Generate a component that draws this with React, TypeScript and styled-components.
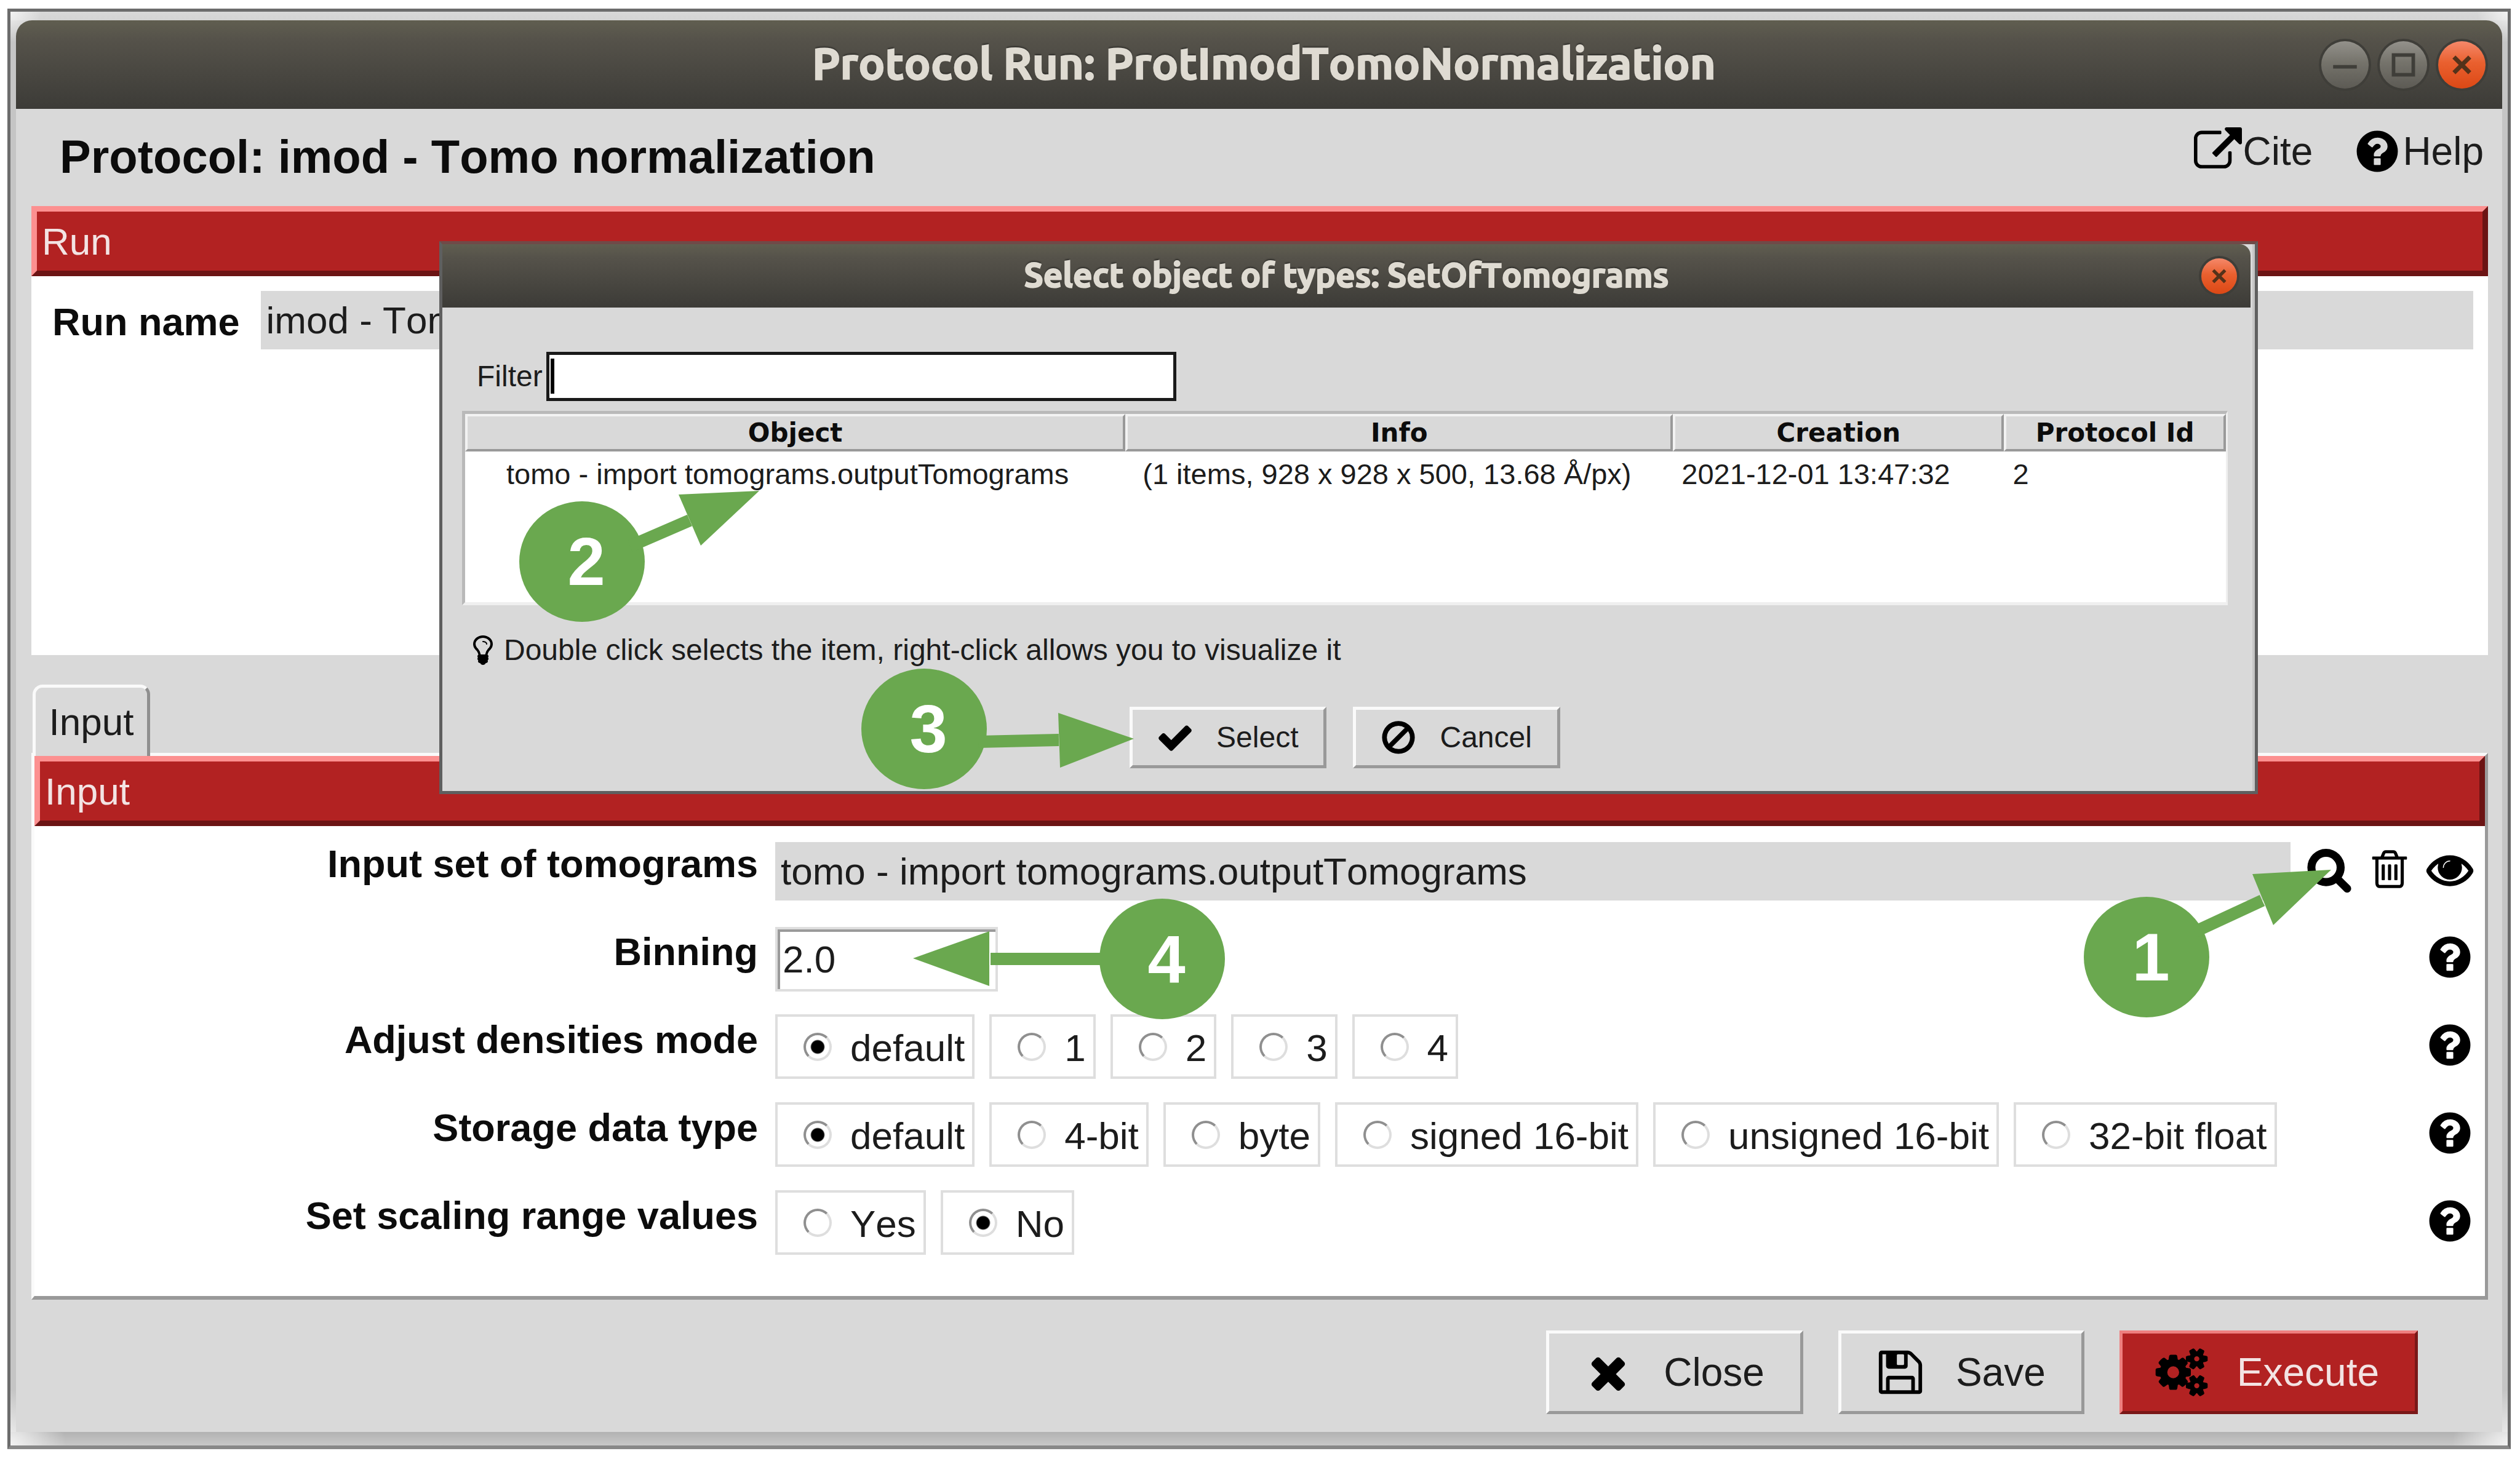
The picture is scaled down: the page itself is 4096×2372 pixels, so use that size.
import React from "react";
import styled, { createGlobalStyle, css } from "styled-components";

const sans = `"Liberation Sans", Arial, Helvetica, sans-serif`;
const titleFont = `Ubuntu, "Noto Sans", "Open Sans", sans-serif`;
const headFont = `"DejaVu Sans", Verdana, sans-serif`;

const GlobalStyle = createGlobalStyle`
  * { box-sizing: border-box; }
  body { margin: 0; background: #ffffff; font-family: ${sans}; font-kerning: none; color: #1c1c1c; }
  button, input { font-family: inherit; font-kerning: inherit; color: inherit; }
`;

/* ---------- icons ---------- */

const glyphs = {
  question:
    "M1024 1376v-192q0-14-9-23t-23-9h-192q-14 0-23 9t-9 23v192q0 14 9 23t23 9h192q14 0 23-9t9-23zm256-672q0-88-55.5-163t-138.5-116-170-41q-243 0-371 213-15 24 8 42l132 100q7 6 19 6 16 0 25-12 53-68 86-92 34-24 86-24 48 0 85.5 26t37.5 59q0 38-20 61t-68 45q-63 28-115.5 86.5t-52.5 125.5v36q0 14 9 23t23 9h192q14 0 23-9t9-23q0-19 21.5-49.5t54.5-49.5q32-18 49-28.5t46-35 44.5-48 28-60.5 12.5-81zm384 192q0 209-103 385.5t-279.5 279.5-385.5 103-385.5-103-279.5-279.5-103-385.5 103-385.5 279.5-279.5 385.5-103 385.5 103 279.5 279.5 103 385.5z",
  search:
    "M1216 832q0-185-131.5-316.5t-316.5-131.5-316.5 131.5-131.5 316.5 131.5 316.5 316.5 131.5 316.5-131.5 131.5-316.5zm512 832q0 52-38 90t-90 38q-54 0-90-38l-343-342q-179 124-399 124-143 0-273.5-55.5t-225-150-150-225-55.5-273.5 55.5-273.5 150-225 225-150 273.5-55.5 273.5 55.5 225 150 150 225 55.5 273.5q0 220-124 399l343 343q37 37 37 90z",
  trash:
    "M704 736v576q0 14-9 23t-23 9h-64q-14 0-23-9t-9-23v-576q0-14 9-23t23-9h64q14 0 23 9t9 23zm256 0v576q0 14-9 23t-23 9h-64q-14 0-23-9t-9-23v-576q0-14 9-23t23-9h64q14 0 23 9t9 23zm256 0v576q0 14-9 23t-23 9h-64q-14 0-23-9t-9-23v-576q0-14 9-23t23-9h64q14 0 23 9t9 23zm128 724v-948h-896v948q0 22 7 40.5t14.5 27 10.5 8.5h832q3 0 10.5-8.5t14.5-27 7-40.5zm-672-1076h448l-48-117q-7-9-17-11h-317q-10 2-17 11zm928 32v64q0 14-9 23t-23 9h-96v948q0 83-47 143.5t-113 60.5h-832q-66 0-113-58.5t-47-141.5v-952h-96q-14 0-23-9t-9-23v-64q0-14 9-23t23-9h309l70-167q15-37 54-63t79-26h320q40 0 79 26t54 63l70 167h309q14 0 23 9t9 23z",
  eye:
    "M1664 960q-152-236-381-353 61 104 61 225 0 185-131.5 316.5t-316.5 131.5-316.5-131.5-131.5-316.5q0-121 61-225-229 117-381 353 133 205 333.5 326.5t434.5 121.5 434.5-121.5 333.5-326.5zm-720-384q0-20-14-34t-34-14q-125 0-214.5 89.5t-89.5 214.5q0 20 14 34t34 14 34-14 14-34q0-86 61-147t147-61q20 0 34-14t14-34zm848 384q0 34-20 69-140 230-376.5 368.5t-499.5 138.5-499.5-139-376.5-368q-20-35-20-69t20-69q140-229 376.5-368t499.5-139 499.5 139 376.5 368q20 35 20 69z",
  external:
    "M1408 928v320q0 119-84.5 203.5t-203.5 84.5h-832q-119 0-203.5-84.5t-84.5-203.5v-832q0-119 84.5-203.5t203.5-84.5h704q14 0 23 9t9 23v64q0 14-9 23t-23 9h-704q-66 0-113 47t-47 113v832q0 66 47 113t113 47h832q66 0 113-47t47-113v-320q0-14 9-23t23-9h64q14 0 23 9t9 23zm384-864v512q0 26-19 45t-45 19-45-19l-176-176-652 652q-10 10-23 10t-23-10l-114-114q-10-10-10-23t10-23l652-652-176-176q-19-19-19-45t19-45 45-19h512q26 0 45 19t19 45z",
  check:
    "M1671 566q0 40-28 68l-724 724-136 136q-28 28-68 28t-68-28l-136-136-362-362q-28-28-28-68t28-68l136-136q28-28 68-28t68 28l294 295 656-657q28-28 68-28t68 28l136 136q28 28 28 68z",
  times:
    "M1490 1322q0 40-28 68l-136 136q-28 28-68 28t-68-28l-294-294-294 294q-28 28-68 28t-68-28l-136-136q-28-28-28-68t28-68l294-294-294-294q-28-28-28-68t28-68l136-136q28-28 68-28t68 28l294 294 294-294q28-28 68-28t68 28l136 136q28 28 28 68t-28 68l-294 294 294 294q28 28 28 68z",
  ban:
    "M1440 893q0-161-87-295l-754 753q137 89 297 89 111 0 211.5-43.5t173.5-116.5 116-174.5 43-212.5zm-999 299l755-754q-135-91-300-91-148 0-273 73t-198 199-73 274q0 162 89 299zm1223-299q0 157-61 300t-163.5 246-245 164-298.5 61-298.5-61-245-164-163.5-246-61-300 61-299.5 163.5-245.5 245-164 298.5-61 298.5 61 245 164 163.5 245.5 61 299.5z",
  floppy:
    "M512 1536h768v-384h-768v384zm896 0h128v-896q0-14-10-38.5t-20-34.5l-281-281q-10-10-34-20t-39-10v416q0 40-28 68t-68 28h-576q-40 0-68-28t-28-68v-416h-128v1280h128v-416q0-40 28-68t68-28h832q40 0 68 28t28 68v416zm-384-928v-320q0-13-9.5-22.5t-22.5-9.5h-192q-13 0-22.5 9.5t-9.5 22.5v320q0 13 9.5 22.5t22.5 9.5h192q13 0 22.5-9.5t9.5-22.5zm640 32v928q0 40-28 68t-68 28h-1344q-40 0-68-28t-28-68v-1344q0-40 28-68t68-28h928q40 0 88 20t76 48l280 280q28 28 48 76t20 88z",
  cogs:
    "M896 896q0-106-75-181t-181-75-181 75-75 181 75 181 181 75 181-75 75-181zm768 512q0-52-38-90t-90-38-90 38-38 90q0 53 37.5 90.5t90.5 37.5 90.5-37.5 37.5-90.5zm0-1024q0-52-38-90t-90-38-90 38-38 90q0 53 37.5 90.5t90.5 37.5 90.5-37.5 37.5-90.5zm-384 421v185q0 10-7 19.5t-16 10.5l-155 24q-11 35-32 76 34 48 90 115 7 11 7 20 0 12-7 19-23 30-82.5 89.5t-78.5 59.5q-11 0-21-7l-115-90q-37 19-77 31-11 108-23 155-7 24-30 24h-186q-11 0-20-7.5t-10-17.5l-23-153q-34-10-75-31l-118 89q-7 7-20 7-11 0-21-8-144-133-144-160 0-9 7-19 10-14 41-53t47-61q-23-44-35-82l-152-24q-10-1-17-9.5t-7-19.5v-185q0-10 7-19.5t16-10.5l155-24q11-35 32-76-34-48-90-115-7-11-7-20 0-12 7-20 22-30 82-89t79-59q11 0 21 7l115 90q34-18 77-32 11-108 23-154 7-24 30-24h186q11 0 20 7.5t10 17.5l23 153q34 10 75 31l118-89q8-7 20-7 11 0 21 8 144 133 144 160 0 8-7 19-12 16-42 54t-45 60q23 48 34 82l152 23q10 2 17 10.5t7 19.5zm640 533v140q0 16-149 31-12 27-30 52 51 113 51 138 0 4-4 7-122 71-124 71-8 0-46-47t-52-68q-20 2-30 2t-30-2q-14 21-52 68t-46 47q-2 0-124-71-4-3-4-7 0-25 51-138-18-25-30-52-149-15-149-31v-140q0-16 149-31 13-29 30-52-51-113-51-138 0-4 4-7 4-2 35-20t59-34 30-16q8 0 46 46.5t52 67.5q20-2 30-2t30 2q51-71 92-112l6-2q4 0 124 70 4 3 4 7 0 25-51 138 17 23 30 52 149 15 149 31zm0-1024v140q0 16-149 31-12 27-30 52 51 113 51 138 0 4-4 7-122 71-124 71-8 0-46-47t-52-68q-20 2-30 2t-30-2q-14 21-52 68t-46 47q-2 0-124-71-4-3-4-7 0-25 51-138-18-25-30-52-149-15-149-31v-140q0-16 149-31 13-29 30-52-51-113-51-138 0-4 4-7 4-2 35-20t59-34 30-16q8 0 46 46.5t52 67.5q20-2 30-2t30 2q51-71 92-112l6-2q4 0 124 70 4 3 4 7 0 25-51 138 17 23 30 52 149 15 149 31z",
  bulb:
    "M1120 576q0 13-9.5 22.5t-22.5 9.5-22.5-9.5-9.5-22.5q0-46-54-71t-106-25q-13 0-22.5-9.5t-9.5-22.5 9.5-22.5 22.5-9.5q50 0 99.5 16t87 54 37.5 90zm160 0q0-72-34.5-134t-90-101.5-123-62-136.5-22.5-136.5 22.5-123 62-90 101.5-34.5 134q0 101 68 180 10 11 30.5 33t30.5 33q128 153 141 298h228q13-145 141-298 10-11 30.5-33t30.5-33q68-79 68-180zm128 0q0 155-103 268-45 49-74.5 87t-59.5 95.5-34 107.5q47 28 47 82 0 37-25 64 25 27 25 64 0 52-45 81 13 23 13 47 0 46-31.5 71t-77.5 25q-20 44-60 70t-87 26-87-26-60-70q-46 0-77.5-25t-31.5-71q0-24 13-47-45-29-45-81 0-37 25-64-25-27-25-64 0-54 47-82-4-50-34-107.5t-59.5-95.5-74.5-87q-103-113-103-268 0-99 44.5-184.5t117-142 164-89 186.5-32.5 186.5 32.5 164 89 117 142 44.5 184.5z",
};

type GlyphName = keyof typeof glyphs;

const GlyphSvg = styled.svg<{ $size: number; $heavy?: boolean }>`
  display: block;
  flex: none;
  width: ${(p) => p.$size}px;
  height: ${(p) => p.$size}px;
  overflow: visible;
  fill: #000000;
  stroke: #000000;
  stroke-width: ${(p) => (p.$heavy ? 60 : 0)};
`;

const Glyph = ({ name, size, heavy }: { name: GlyphName; size: number; heavy?: boolean }) => (
  <GlyphSvg
    $size={size}
    $heavy={heavy}
    viewBox={name === "cogs" ? "0 0 1920 1792" : "0 0 1792 1792"}
    aria-hidden="true"
  >
    <path d={glyphs[name]} />
  </GlyphSvg>
);

/* ---------- window chrome ---------- */

const Page = styled.div`
  display: flex;
  min-height: 100vh;
  padding: 14px 15px 16px 12px;
`;

const Frame = styled.div`
  flex: 1;
  display: flex;
  border: 5px solid #6c6c6c;
  border-bottom: 6px solid #888888;
  padding: 14px 9px 22px;
  background:
    radial-gradient(circle at 0 0, #f2f2f2 0, rgba(242, 242, 242, 0) 50px),
    radial-gradient(circle at 100% 0, #f2f2f2 0, rgba(242, 242, 242, 0) 50px),
    radial-gradient(circle at 0 100%, #f2f2f2 0, rgba(236, 236, 236, 0) 90px),
    radial-gradient(circle at 100% 100%, #f2f2f2 0, rgba(236, 236, 236, 0) 90px),
    linear-gradient(#d8d8d8, #d4d4d4) top / 100% 14px no-repeat,
    linear-gradient(#b2b2b2, #c8c8c8) bottom / 100% 22px no-repeat,
    #c5c5c5;
`;

const Window = styled.main`
  position: relative;
  flex: 1;
  display: flex;
  flex-direction: column;
  background: #d9d9d9;
  border-radius: 26px 26px 0 0;
`;

const TitleBar = styled.header<{ $compact?: boolean }>`
  display: grid;
  grid-template-columns: 1fr auto 1fr;
  align-items: center;
  height: ${(p) => (p.$compact ? 103 : 144)}px;
  padding: 0 ${(p) => (p.$compact ? 22 : 27)}px;
  border-radius: ${(p) => (p.$compact ? "0 18px 0 0" : "26px 26px 0 0")};
  background: linear-gradient(#605e50, #55524a 22%, #3c3b37);
  color: #dfdbd2;
  font-family: ${titleFont};
`;

const TitleText = styled.h1<{ $compact?: boolean }>`
  grid-column: 2;
  margin: 0;
  padding: ${(p) => (p.$compact ? "0 0 4px" : "0 0 4px 16px")};
  font-size: ${(p) => (p.$compact ? 55 : 72)}px;
  line-height: 1;
  font-weight: 700;
  -webkit-text-stroke: 2px #dfdbd2;
  text-shadow: 0 -3px 2px rgba(30, 30, 28, 0.6);
  white-space: nowrap;
`;

const WindowButtons = styled.div`
  display: flex;
  justify-content: flex-end;
  gap: 18px;
`;

const RoundButton = styled.button<{ $size: number; $close?: boolean }>`
  width: ${(p) => p.$size}px;
  height: ${(p) => p.$size}px;
  padding: 0;
  border: 0;
  border-radius: 50%;
  background: ${(p) =>
    p.$close ? "linear-gradient(#f5886a, #e9602f 45%, #dc4815)" : "linear-gradient(#93918b, #75736b 45%, #5c5a54)"};
  box-shadow: 0 0 0 4px #3f3e39;

  svg {
    display: block;
    width: 100%;
    height: 100%;
    fill: none;
    stroke: ${(p) => (p.$close ? "#54321a" : "#3f3e39")};
    stroke-width: ${(p) => (p.$close ? 2.2 : 1.8)};
  }
`;

/* ---------- main content ---------- */

const PageHead = styled.div`
  display: flex;
  justify-content: space-between;
  align-items: center;
  height: 158px;
  padding: 0 30px 2px 71px;
`;

const Heading = styled.h2`
  margin: 0;
  font-size: 76px;
  line-height: 84px;
  font-weight: 700;
  color: #0c0c0c;
`;

const HeadLinks = styled.nav`
  display: flex;
  gap: 66px;
  padding-bottom: 18px;
`;

const HeadLink = styled.a`
  display: flex;
  align-items: center;
  gap: 2px;
  color: #1c1c1c;
  font-size: 64px;
  line-height: 72px;
  text-decoration: none;
`;

const Content = styled.div`
  flex: 1;
  display: flex;
  flex-direction: column;
  padding: 0 23px 0 25px;
`;

const SectionBar = styled.h3`
  margin: 0;
  height: 114px;
  border: 9px solid;
  border-color: #fc9090 #6c1414 #6c1414 #fc9090;
  padding: 0 8px;
  background: #b22222;
  color: #f3e3e3;
  font-size: 62px;
  line-height: 98px;
  font-weight: 400;
`;

const RunBody = styled.div`
  display: flex;
  align-items: flex-start;
  gap: 34px;
  min-height: 616px;
  padding: 24px 24px 24px 34px;
  background: #ffffff;
`;

const boldLabel = css`
  font-size: 63px;
  line-height: 72px;
  font-weight: 700;
  color: #0c0c0c;
`;

const RunLabel = styled.label`
  ${boldLabel}
  padding-top: 14px;
`;

const FlatInput = styled.input`
  flex: 1;
  min-width: 0;
  height: 95px;
  border: 0;
  padding: 0 9px;
  background: #d9d9d9;
  font-size: 62px;
`;

const Tabs = styled.div`
  display: flex;
  margin-top: 48px;
  padding-left: 2px;
`;

const Tab = styled.button`
  height: 116px;
  width: 191px;
  margin-bottom: -5px;
  border: 5px solid;
  border-color: #fafafa #8f8f8f transparent #fafafa;
  border-bottom: 0;
  border-radius: 16px 16px 0 0;
  padding: 0;
  background: #d9d9d9;
  font-size: 62px;
  z-index: 1;
`;

const Pane = styled.section`
  flex: 1;
  display: flex;
  flex-direction: column;
  border: 5px solid;
  border-color: #fafafa #999999 #999999 #fafafa;
  border-bottom-width: 6px;
  background: #ffffff;
`;

const Form = styled.form`
  flex: 1;
  display: grid;
  grid-auto-rows: 1fr;
  padding: 2px 18px 48px 0;
`;

const Row = styled.div`
  display: grid;
  grid-template-columns: 1176px 1fr auto;
  align-items: center;
`;

const RowLabel = styled.label`
  ${boldLabel}
  padding-bottom: 24px;
  text-align: right;
`;

const Controls = styled.div`
  display: flex;
  align-items: center;
  gap: 24px;
  padding: 0 24px 0 28px;
`;

const Actions = styled.div`
  display: flex;
  gap: 20px;
  padding-bottom: 6px;
`;

const IconButton = styled.button`
  display: flex;
  align-items: center;
  justify-content: center;
  width: 78px;
  height: 78px;
  border: 0;
  padding: 0;
  background: none;
`;

const NumberInput = styled.input`
  width: 362px;
  height: 105px;
  border: 4px solid #dedede;
  padding: 0 8px;
  background: #ffffff;
  box-shadow: inset 4px 4px 0 #9a9a9a;
  font-size: 62px;
`;

const Option = styled.label`
  display: flex;
  align-items: center;
  height: 105px;
  border: 4px solid #dedede;
  padding: 0 12px 0 42px;
  background: #ffffff;
  font-size: 62px;
  line-height: 72px;
  white-space: nowrap;
`;

const OptionText = styled.span`
  padding-top: 4px;
`;

const Radio = styled.input`
  appearance: none;
  flex: none;
  width: 46px;
  height: 46px;
  margin: 0 30px 0 0;
  border: 4px solid;
  border-color: #8f8f8f #dedede #dedede #8f8f8f;
  border-radius: 50%;
  background: #ffffff;

  &:checked {
    background: radial-gradient(circle, #000000 10px, #ffffff 12px);
  }
`;

const Footer = styled.footer`
  display: flex;
  justify-content: flex-end;
  gap: 57px;
  padding: 50px 137px 29px 0;
`;

const ActionButton = styled.button<{ $primary?: boolean; $small?: boolean }>`
  display: flex;
  align-items: center;
  height: ${(p) => (p.$small ? 100 : 136)}px;
  gap: ${(p) => (p.$small ? 36 : 49)}px;
  padding: ${(p) => (p.$small ? "0 41px 0 38px" : "0 58px 0 55px")};
  border: 5px solid;
  border-color: ${(p) => (p.$primary ? "#ee7f7f #7a1717 #7a1717 #ee7f7f" : "#fafafa #999999 #999999 #fafafa")};
  background: ${(p) => (p.$primary ? "#b22222" : "#d9d9d9")};
  color: ${(p) => (p.$primary ? "#f3e3e3" : "#1c1c1c")};
  font-size: ${(p) => (p.$small ? 48 : 64)}px;
  line-height: ${(p) => (p.$small ? 54 : 72)}px;
`;

/* ---------- selection dialog ---------- */

const Dialog = styled.section`
  position: absolute;
  top: 359px;
  left: 688px;
  right: 397px;
  border: 5px solid #5f5f5f;
  border-top-color: #704a48;
  padding-right: 7px;
  background: linear-gradient(#c6c6c6, #c6c6c6) right / 4px 100% no-repeat, #d9d9d9;
`;

const DialogBody = styled.div`
  display: flex;
  flex-direction: column;
  padding: 72px 37px 37px 32px;
  font-size: 48px;
  line-height: 54px;
`;

const FilterRow = styled.div`
  display: flex;
  align-items: center;
  gap: 6px;
  padding-left: 24px;
`;

const FilterBox = styled.div`
  position: relative;
  width: 1024px;
`;

const FilterInput = styled.input`
  display: block;
  width: 100%;
  height: 80px;
  border: 5px solid #1a1a1a;
  padding: 0 8px;
  background: #ffffff;
  font-size: 48px;
  outline: 0;
`;

const Caret = styled.span`
  position: absolute;
  top: 11px;
  left: 7px;
  width: 6px;
  height: 57px;
  background: #000000;
`;

const TableBox = styled.div`
  height: 316px;
  margin-top: 16px;
  border: 5px solid;
  border-color: #b9b9b9 #efefef #efefef #b9b9b9;
  border-right-width: 3px;
  background: #ffffff;
`;

const Table = styled.table`
  width: 100%;
  border-collapse: separate;
  border-spacing: 0;
  table-layout: fixed;
`;

const Th = styled.th<{ $width: string }>`
  width: ${(p) => p.$width};
  height: 61px;
  padding: 0;
  border: 4px solid;
  border-color: #f2f2f2 #999999 #999999 #f2f2f2;
  background: #d9d9d9;
  color: #0c0c0c;
  font-family: ${headFont};
  font-size: 42px;
  line-height: 50px;
  font-weight: 700;
`;

const Td = styled.td<{ $indent: number }>`
  height: 74px;
  padding: 0 0 0 ${(p) => p.$indent}px;
  font-size: 47px;
  font-kerning: normal;
  white-space: nowrap;
`;

const Hint = styled.p`
  display: flex;
  align-items: center;
  gap: 6px;
  margin: 45px 0 64px;
  padding-left: 6px;
`;

const DialogButtons = styled.div`
  display: flex;
  justify-content: center;
  gap: 43px;
`;

/* ---------- numbered callouts ---------- */

const CalloutBox = styled.div<{ $x: number; $y: number }>`
  position: absolute;
  left: ${(p) => p.$x}px;
  top: ${(p) => p.$y}px;
  display: flex;
  align-items: center;
  justify-content: center;
  width: 204px;
  height: 196px;
  padding: 0 0 0 14px;
  border-radius: 50%;
  background: #6aa84f;
  color: #ffffff;
  font-size: 110px;
  line-height: 120px;
  font-weight: 700;
`;

const Arrow = styled.svg`
  position: absolute;
  top: 0;
  left: 0;
  width: 100%;
  height: 100%;
  overflow: visible;
  fill: #6aa84f;
  stroke: #6aa84f;
`;

const Digit = styled.span`
  position: relative;
`;

type CalloutProps = {
  n: number;
  x: number;
  y: number;
  shaft: [number, number, number, number];
  head: string;
};

/* Arrow coordinates are relative to the badge's own top left corner. */
const Callout = ({ n, x, y, shaft, head }: CalloutProps) => (
  <CalloutBox $x={x} $y={y}>
    <Arrow aria-hidden="true">
      <line x1={shaft[0]} y1={shaft[1]} x2={shaft[2]} y2={shaft[3]} strokeWidth="20" />
      <polygon points={head} strokeWidth="0" />
    </Arrow>
    <Digit>{n}</Digit>
  </CalloutBox>
);

/* ---------- form pieces ---------- */

const HelpButton = ({ topic }: { topic: string }) => (
  <Actions>
    <IconButton type="button" aria-label={`Help: ${topic}`}>
      <Glyph name="question" size={78} />
    </IconButton>
  </Actions>
);

type RadioRowProps = { label: string; name: string; options: string[]; selected: string };

const RadioRow = ({ label, name, options, selected }: RadioRowProps) => (
  <Row role="radiogroup" aria-labelledby={`${name}-label`}>
    <RowLabel as="span" id={`${name}-label`}>
      {label}
    </RowLabel>
    <Controls>
      {options.map((option) => (
        <Option key={option}>
          <Radio type="radio" name={name} value={option} defaultChecked={option === selected} />
          <OptionText>{option}</OptionText>
        </Option>
      ))}
    </Controls>
    <HelpButton topic={label} />
  </Row>
);

const CloseMark = () => (
  <svg viewBox="0 0 24 24">
    <path d="M8 8l8 8M16 8l-8 8" />
  </svg>
);

const columns = [
  { title: "Object", width: "37.5%" },
  { title: "Info", width: "31.1%" },
  { title: "Creation", width: "18.8%" },
  { title: "Protocol Id", width: "12.6%" },
];

const SelectDialog = () => (
  <Dialog role="dialog" aria-labelledby="dialog-title">
    <TitleBar $compact>
      <TitleText as="h2" id="dialog-title" $compact>
        Select object of types: SetOfTomograms
      </TitleText>
      <WindowButtons>
        <RoundButton $size={58} $close aria-label="Close dialog">
          <CloseMark />
        </RoundButton>
      </WindowButtons>
    </TitleBar>
    <DialogBody>
      <FilterRow>
        <label htmlFor="filter">Filter</label>
        <FilterBox>
          <FilterInput id="filter" type="text" />
          <Caret />
        </FilterBox>
      </FilterRow>
      <TableBox>
        <Table>
          <thead>
            <tr>
              {columns.map((column) => (
                <Th key={column.title} $width={column.width} scope="col">
                  {column.title}
                </Th>
              ))}
            </tr>
          </thead>
          <tbody>
            <tr>
              <Td $indent={67}>tomo - import tomograms.outputTomograms</Td>
              <Td $indent={28}>(1 items, 928 x 928 x 500, 13.68 Å/px)</Td>
              <Td $indent={14}>2021-12-01 13:47:32</Td>
              <Td $indent={14}>2</Td>
            </tr>
          </tbody>
        </Table>
      </TableBox>
      <Hint>
        <Glyph name="bulb" size={56} />
        Double click selects the item, right-click allows you to visualize it
      </Hint>
      <DialogButtons>
        <ActionButton $small type="button">
          <Glyph name="check" size={62} />
          Select
        </ActionButton>
        <ActionButton $small type="button">
          <Glyph name="ban" size={62} />
          Cancel
        </ActionButton>
      </DialogButtons>
    </DialogBody>
  </Dialog>
);

export default function App() {
  return (
    <>
      <GlobalStyle />
      <Page>
        <Frame>
          <Window>
            <TitleBar>
              <TitleText>Protocol Run: ProtImodTomoNormalization</TitleText>
              <WindowButtons>
                <RoundButton $size={77} aria-label="Minimize">
                  <svg viewBox="0 0 24 24">
                    <path d="M6 13h12" />
                  </svg>
                </RoundButton>
                <RoundButton $size={77} aria-label="Maximize">
                  <svg viewBox="0 0 24 24">
                    <rect x="7" y="7" width="10" height="10" />
                  </svg>
                </RoundButton>
                <RoundButton $size={77} $close aria-label="Close window">
                  <CloseMark />
                </RoundButton>
              </WindowButtons>
            </TitleBar>
            <PageHead>
              <Heading>Protocol: imod - Tomo normalization</Heading>
              <HeadLinks>
                <HeadLink href="#cite">
                  <Glyph name="external" size={78} />
                  Cite
                </HeadLink>
                <HeadLink href="#help">
                  <Glyph name="question" size={78} />
                  Help
                </HeadLink>
              </HeadLinks>
            </PageHead>
            <Content>
              <SectionBar>Run</SectionBar>
              <RunBody>
                <RunLabel htmlFor="run-name">Run name</RunLabel>
                <FlatInput id="run-name" readOnly value="imod - Tomo normalization" />
              </RunBody>
              <Tabs role="tablist">
                <Tab role="tab" aria-selected="true">
                  Input
                </Tab>
              </Tabs>
              <Pane>
                <SectionBar>Input</SectionBar>
                <Form>
                  <Row>
                    <RowLabel htmlFor="tomograms">Input set of tomograms</RowLabel>
                    <Controls>
                      <FlatInput id="tomograms" readOnly value="tomo - import tomograms.outputTomograms" />
                    </Controls>
                    <Actions>
                      <IconButton type="button" aria-label="Search">
                        <Glyph name="search" size={74} heavy />
                      </IconButton>
                      <IconButton type="button" aria-label="Remove">
                        <Glyph name="trash" size={72} />
                      </IconButton>
                      <IconButton type="button" aria-label="View">
                        <Glyph name="eye" size={74} heavy />
                      </IconButton>
                    </Actions>
                  </Row>
                  <Row>
                    <RowLabel htmlFor="binning">Binning</RowLabel>
                    <Controls>
                      <NumberInput id="binning" type="text" defaultValue="2.0" />
                    </Controls>
                    <HelpButton topic="Binning" />
                  </Row>
                  <RadioRow
                    label="Adjust densities mode"
                    name="densities"
                    options={["default", "1", "2", "3", "4"]}
                    selected="default"
                  />
                  <RadioRow
                    label="Storage data type"
                    name="storage"
                    options={["default", "4-bit", "byte", "signed 16-bit", "unsigned 16-bit", "32-bit float"]}
                    selected="default"
                  />
                  <RadioRow label="Set scaling range values" name="scaling" options={["Yes", "No"]} selected="No" />
                </Form>
              </Pane>
            </Content>
            <Footer>
              <ActionButton type="button">
                <Glyph name="times" size={82} />
                Close
              </ActionButton>
              <ActionButton type="button">
                <Glyph name="floppy" size={82} />
                Save
              </ActionButton>
              <ActionButton type="button" $primary>
                <Glyph name="cogs" size={82} heavy />
                Execute
              </ActionButton>
            </Footer>
            <SelectDialog />
            <Callout n={1} x={3361} y={1425} shaft={[180, 57, 290, 6]} head="402,-44 274,-37 308,46" />
            <Callout n={2} x={818} y={782} shaft={[180, 73, 277, 31]} head="390,-17 259,-11 295,72" />
            <Callout n={3} x={1374} y={1054} shaft={[190, 119, 321, 116]} head="443,114 320,72 323,161" />
            <Callout n={4} x={1761} y={1428} shaft={[10, 98, -177, 98]} head="-303,97 -179,53 -179,142" />
          </Window>
        </Frame>
      </Page>
    </>
  );
}
